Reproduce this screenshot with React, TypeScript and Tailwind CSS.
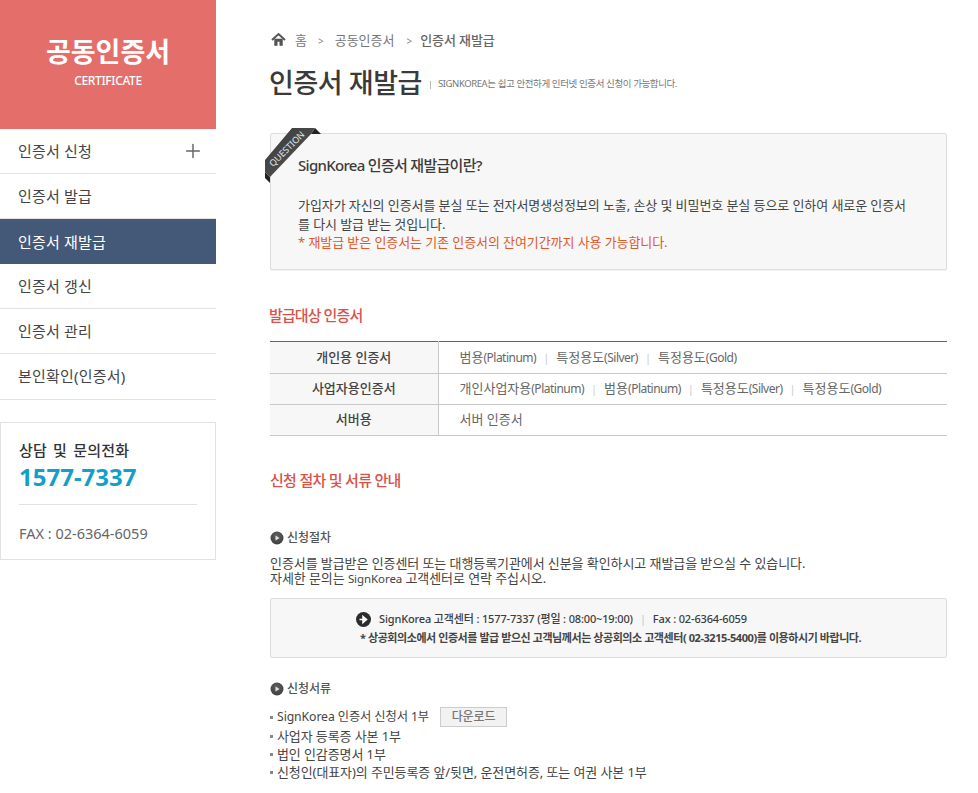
import { Plus } from "lucide-react";

const FONT = "font-['Noto_Sans','Noto_Sans_CJK_KR',sans-serif]";

const menu = ["인증서 신청", "인증서 발급", "인증서 재발급", "인증서 갱신", "인증서 관리", "본인확인(인증서)"];

const targets = [
  { head: "개인용 인증서", items: ["범용(Platinum)", "특정용도(Silver)", "특정용도(Gold)"] },
  { head: "사업자용인증서", items: ["개인사업자용(Platinum)", "범용(Platinum)", "특정용도(Silver)", "특정용도(Gold)"] },
  { head: "서버용", items: ["서버 인증서"] },
];

function Sidebar() {
  return (
    <aside className="w-[216px] shrink-0">
      <div className="h-[129px] bg-[#e46e6a] text-white text-center pt-[34px]">
        <h1 className="text-[27px] leading-[36px] font-bold">공동인증서</h1>
        <p className="text-[12px] leading-[18px] mt-[2px] font-medium tracking-[-0.35px]">CERTIFICATE</p>
      </div>
      <ul>
        {menu.map((m, i) => (
          <li
            key={m}
            className={`h-[45px] flex items-center justify-between pl-[18px] pr-[12px] text-[15px] tracking-[0.2px] ${
              i === 2 ? "bg-[#445877] text-white" : "border-b border-[#e2e2e2] text-[#444]"
            } ${i === 5 ? "h-[46px]" : ""} ${i >= 1 && i <= 4 ? "pt-px" : ""}`}
          >
            {m}
            {i === 0 && <Plus className="w-[22px] h-[22px] text-[#666]" strokeWidth={1.6} />}
          </li>
        ))}
      </ul>
      <div className="mt-[22px] h-[138px] border border-[#e2e2e2] px-[18px] pt-[17px]">
        <p className="text-[15px] leading-[20px] font-medium text-[#333] tracking-[0.2px] [word-spacing:2px]">상담 및 문의전화</p>
        <p className="text-[24px] leading-[32px] font-bold text-[#149fc8] mt-[1px]">1577-7337</p>
        <div className="border-t border-[#e2e2e2] mt-[11px] pt-[18px] text-[14.5px] leading-[20px] text-[#666]">FAX : 02-6364-6059</div>
      </div>
    </aside>
  );
}

function Ribbon() {
  return (
    <svg className="absolute left-[-6px] top-[-6px]" width="60" height="60" viewBox="0 0 60 60">
      <defs>
        <linearGradient id="band" x1="0" y1="0" x2="1" y2="1">
          <stop offset="0" stopColor="#3a3a3a" />
          <stop offset="1" stopColor="#585858" />
        </linearGradient>
      </defs>
      <polygon points="46,6 50,0 56,6" fill="#222" />
      <polygon points="5,49 5,55 0,50 0,44" fill="#222" />
      <polygon points="0,32 27,0 50,0 46,6 5,49 0,44" fill="url(#band)" />
      <text
        x="22"
        y="24"
        fontSize="9"
        fill="#e8e8e8"
        textAnchor="middle"
        transform="rotate(-45 22 21)"
        fontFamily="'Noto Sans', sans-serif"
      >
        QUESTION
      </text>
    </svg>
  );
}

function Bullet({ label }: { label: string }) {
  return (
    <h4 className="flex items-center gap-[3px] text-[12px] leading-[16px] font-medium text-[#555]">
      <svg width="14" height="14" viewBox="0 0 14 14">
        <defs>
          <radialGradient id="dot" cx="0.5" cy="0.35" r="0.7">
            <stop offset="0" stopColor="#5f5f5f" />
            <stop offset="1" stopColor="#3d3d3d" />
          </radialGradient>
        </defs>
        <circle cx="7" cy="7" r="6.5" fill="url(#dot)" />
        <polygon points="5.5,4.5 5.5,9.5 9.5,7" fill="#e4e4e4" />
      </svg>
      {label}
    </h4>
  );
}

// korean part at 13px, the latin part in brackets narrower
function Item({ text }: { text: string }) {
  const at = text.indexOf("(");
  if (at < 0) return <span>{text}</span>;
  return (
    <span>
      {text.slice(0, at)}
      <span className="text-[12px] tracking-[-0.5px]">{text.slice(at)}</span>
    </span>
  );
}

function Main() {
  return (
    <main className="w-[677px] ml-[54px]">
      <nav className="flex items-center h-[16px] mt-[33px] text-[13px] text-[#777]">
        <svg width="15" height="15" viewBox="0 0 15 15" className="ml-[1px] mr-[9px] mb-[3px]" fill="none" stroke="#555">
          <path d="M1 8 7.5 2 14 8" strokeWidth="2" />
          <path d="M3.6 7v6.5h2.6V9.5h2.6v4h2.6V7z" fill="#555" strokeWidth="0.6" />
        </svg>
        <span>홈</span>
        <span className="ml-[11px] mr-[11px] text-[10px] text-[#888]">&gt;</span>
        <span>공동인증서</span>
        <span className="ml-[12px] mr-[8px] text-[10px] text-[#888]">&gt;</span>
        <span className="font-medium text-[#666] tracking-[-0.1px]">인증서 재발급</span>
      </nav>
      <div className="flex items-center mt-[14px] h-[40px]">
        <h2 className="text-[27px] leading-[40px] font-medium text-[#3a3a3a] tracking-[-0.45px] -ml-[1px]">인증서 재발급</h2>
        <span className="ml-[8px] mr-[7px] mt-[3px] w-px h-[8px] bg-[#bbb]" />
        <p className="mt-[3px] text-[9.5px] text-[#777] tracking-[-0.4px]">SIGNKOREA는 쉽고 안전하게 인터넷 인증서 신청이 가능합니다.</p>
      </div>

      <section className="relative mt-[30px] h-[137px] rounded-[2px] border border-[#ddd] bg-[#f7f7f7] pl-[27px] pr-[30px] pt-[20px] shadow-[0_1px_1px_rgba(0,0,0,0.06)]">
        <Ribbon />
        <h3 className="text-[15px] leading-[22px] font-medium text-[#3c3c3c] tracking-[-0.7px]">SignKorea 인증서 재발급이란?</h3>
        <p className="mt-[20px] text-[13px] leading-[18.5px] text-[#444] tracking-[-0.08px]">
          가입자가 자신의 인증서를 분실 또는 전자서명생성정보의 노출, 손상 및 비밀번호 분실 등으로 인하여 새로운 인증서를 다시 발급 받는 것입니다.
          <br />
          <span className="text-[#e0592a]">* 재발급 받은 인증서는 기존 인증서의 잔여기간까지 사용 가능합니다.</span>
        </p>
      </section>

      <h3 className="mt-[34px] text-[15px] leading-[22px] font-medium text-[#d9524a] tracking-[-0.9px] -ml-[1px]">발급대상 인증서</h3>
      <table className="mt-[15px] w-full border-t border-[#666] text-[13px] border-collapse">
        <tbody>
          {targets.map((t, r) => (
            <tr key={t.head} className={`border-b border-[#c8c8c8] ${r === 0 ? "h-[32px]" : "h-[31px]"}`}>
              <th className="w-[168px] bg-[#f7f7f7] border-r border-[#c8c8c8] font-medium text-[#444]">{t.head}</th>
              <td className="pl-[21px] text-[#666]">
                {t.items.map((x, i) => (
                  <span key={x}>
                    {i > 0 && <span className="mx-[7px] text-[#ccc] text-[11px]">|</span>}
                    <Item text={x} />
                  </span>
                ))}
              </td>
            </tr>
          ))}
        </tbody>
      </table>

      <h3 className="mt-[33px] text-[15px] leading-[22px] font-medium text-[#d9524a] tracking-[-0.7px]">신청 절차 및 서류 안내</h3>

      <div className="mt-[39px]">
        <Bullet label="신청절차" />
      </div>
      <p className="mt-[10px] text-[13px] leading-[15px] text-[#444] tracking-[-0.08px]">
        인증서를 발급받은 인증센터 또는 대행등록기관에서 신분을 확인하시고 재발급을 받으실 수 있습니다.
        <br />
        자세한 문의는 <span className="text-[11.5px]">SignKorea</span> 고객센터로 연락 주십시오.
      </p>
      <div className="mt-[12px] h-[60px] rounded-[2px] border border-[#ddd] bg-[#f7f7f7] pt-[11px] text-[#3c3c3c]">
        <div className="flex items-center pl-[85px] text-[11px] leading-[18px] font-medium tracking-[-0.15px]">
          <svg width="15" height="15" viewBox="0 0 15 15" className="mr-[8px]">
            <circle cx="7.5" cy="7.5" r="7.5" fill="#2c2c2c" />
            <path d="M3.5 7.5h5M7 4.5l3.5 3-3.5 3z" stroke="#fff" strokeWidth="1.6" fill="#fff" />
          </svg>
          SignKorea 고객센터 : 1577-7337 (평일 : 08:00~19:00)
          <span className="mx-[7px] text-[#ccc]">|</span>
          Fax : 02-6364-6059
        </div>
        <p className="pl-[89px] mt-[2px] text-[11px] leading-[16px] font-bold tracking-[-0.43px] text-[#444]">
          * 상공회의소에서 인증서를 발급 받으신 고객님께서는 상공회의소 고객센터( 02-3215-5400)를 이용하시기 바랍니다.
        </p>
      </div>

      <div className="mt-[23px]">
        <Bullet label="신청서류" />
      </div>
      <ul className="mt-[10px] text-[13px] leading-[18px] text-[#444] tracking-[-0.1px]">
        {["SignKorea 인증서 신청서 1부", "사업자 등록증 사본 1부", "법인 인감증명서 1부", "신청인(대표자)의 주민등록증 앞/뒷면, 운전면허증, 또는 여권 사본 1부"].map((x, i) => (
          <li key={x} className="flex items-center">
            <span className="w-[3px] h-[3px] bg-[#888] mr-[4px]" />
            {i === 0 ? (
              <>
                <span className="text-[12.25px]">{x}</span>
                <button className="ml-[11px] w-[67px] h-[20px] border border-[#ccc] bg-[#f2f2f2] text-[12px] font-medium text-[#777]">
                  다운로드
                </button>
              </>
            ) : (
              x
            )}
          </li>
        ))}
      </ul>
    </main>
  );
}

export default function App() {
  return (
    <div className={`flex w-[978px] h-[793px] overflow-hidden bg-white ${FONT}`}>
      <Sidebar />
      <Main />
    </div>
  );
}
